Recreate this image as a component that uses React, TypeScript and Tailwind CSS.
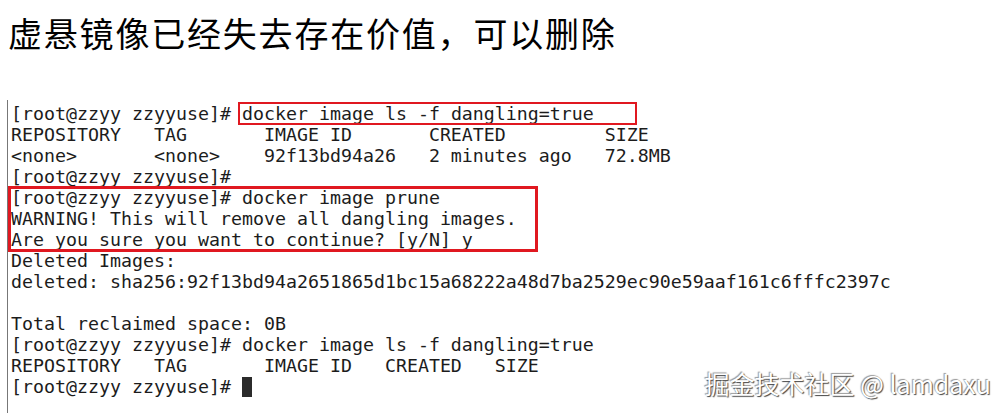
import React from "react";

const mono = "font-['DejaVu_Sans_Mono',monospace]";

const Line = ({ children }: { children?: React.ReactNode }) => (
  <div className="h-[21px] leading-[21px] whitespace-pre">{children}</div>
);

export default function App() {
  return (
    <div className="relative w-[1007px] h-[413px] bg-white overflow-hidden text-[#1c1c1c]">
      {/* Heading */}
      <h1 className="pl-[8px] pt-[11px] h-[100px] text-[34px] tracking-[1.8px] leading-[44px] font-['Noto_Sans_CJK_SC',sans-serif] font-normal text-black">
        虚悬镜像已经失去存在价值，可以删除
      </h1>

      {/* Terminal */}
      <div className={`${mono} text-[18.27px] ml-[7px] pl-[3px] pt-[3px] h-[313px] border-l border-[#777]`}>
        <Line>
          [root@zzyy zzyyuse]#{" "}
          <span className="relative">
            docker image ls -f dangling=true
            <span className="absolute left-[-4px] top-[-1px] bottom-[-1px] w-[399px] border-[2.5px] border-[#e01820]" />
          </span>
        </Line>
        <Line>REPOSITORY   TAG       IMAGE ID       CREATED         SIZE</Line>
        <Line>{"<none>       <none>    92f13bd94a26   2 minutes ago   72.8MB"}</Line>
        <Line>[root@zzyy zzyyuse]#</Line>
        <div className="relative">
          <Line>[root@zzyy zzyyuse]# docker image prune</Line>
          <Line>WARNING! This will remove all dangling images.</Line>
          <Line>Are you sure you want to continue? [y/N] y</Line>
          <span className="absolute left-[-3px] top-[-1px] bottom-[-2px] w-[530px] border-[3px] border-[#e01820]" />
        </div>
        <Line>Deleted Images:</Line>
        <Line>deleted: sha256:92f13bd94a2651865d1bc15a68222a48d7ba2529ec90e59aaf161c6fffc2397c</Line>
        <Line />
        <Line>Total reclaimed space: 0B</Line>
        <Line>[root@zzyy zzyyuse]# docker image ls -f dangling=true</Line>
        <Line>REPOSITORY   TAG       IMAGE ID   CREATED   SIZE</Line>
        <Line>
          [root@zzyy zzyyuse]#{" "}
          <span className="inline-block w-[10px] h-[20px] bg-[#2b2b2b] align-[-4px]" />
        </Line>
      </div>

      {/* Watermark */}
      <div className="absolute right-[16px] top-[368px] text-[25px] leading-[30px] text-white font-['Noto_Sans_CJK_SC',sans-serif] [text-shadow:1px_1px_1px_#444,-1px_-1px_1px_#999]">
        掘金技术社区 @ lamdaxu
      </div>
    </div>
  );
}
